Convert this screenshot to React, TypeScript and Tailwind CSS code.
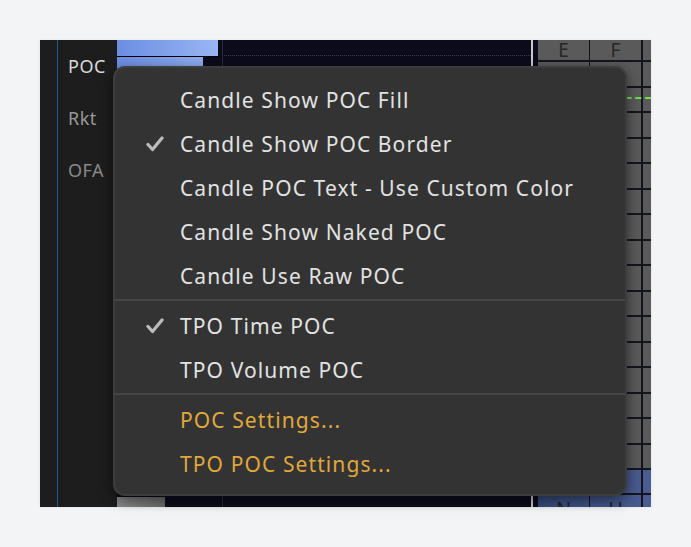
import React from "react";

interface MenuItem {
  label: string;
  checked?: boolean;
  accent?: boolean;
}

const groups: MenuItem[][] = [
  [
    { label: "Candle Show POC Fill" },
    { label: "Candle Show POC Border", checked: true },
    { label: "Candle POC Text - Use Custom Color" },
    { label: "Candle Show Naked POC" },
    { label: "Candle Use Raw POC" },
  ],
  [{ label: "TPO Time POC", checked: true }, { label: "TPO Volume POC" }],
  [
    { label: "POC Settings...", accent: true },
    { label: "TPO POC Settings...", accent: true },
  ],
];

function Check() {
  return (
    <svg width="18" height="18" viewBox="0 0 18 18" className="absolute left-[31px] top-[13px]">
      <path
        d="M2 9.5 L6.5 14.5 L16 3"
        fill="none"
        stroke="#bbbbbb"
        strokeWidth="3.3"
        strokeLinecap="round"
        strokeLinejoin="round"
      />
    </svg>
  );
}

function PocMenu() {
  return (
    <div className="absolute left-[73px] top-[26px] w-[514px] h-[430px] rounded-[12px] bg-[#333333] border-2 border-[#3d3d3d] shadow-[0_4px_14px_rgba(0,0,0,0.5)] pt-[10px] pb-[8px]">
      {groups.map((group, gi) => (
        <div key={gi}>
          {gi > 0 && <div className="mt-[1px] mb-[3px] h-[2px] bg-[#454545]" />}
          {group.map((item) => (
            <div key={item.label} className="relative h-[44px] flex items-center pl-[65px]">
              {item.checked && <Check />}
              <span
                className={`text-[21px] leading-none tracking-[1.1px] ${
                  item.accent ? "text-[#e0a83c]" : "text-[#e2e2e2]"
                }`}
              >
                {item.label}
              </span>
            </div>
          ))}
        </div>
      ))}
    </div>
  );
}

function ChartPane() {
  return (
    <div className="relative flex-1 bg-[#0c0b1b] flex flex-col overflow-hidden">
      <div className="flex h-[16px]">
        <div className="w-[101px] bg-gradient-to-r from-[#6b8ee2] to-[#9ab5f4]" />
        <div className="flex-1 border-b border-dotted border-[#3a3a4a] ml-[4px]" />
      </div>
      <div className="h-[1px] w-[101px] bg-black" />
      <div className="flex-1 flex">
        <div className="w-[86px] bg-gradient-to-r from-[#6b8ee2] to-[#8fadf0] h-[12px]" />
      </div>
      <div className="h-[10px] w-[48px] bg-gradient-to-r from-[#8a8a8a] to-[#6a6a6a]" />
      <div className="absolute left-[105px] top-0 bottom-0 w-[1px] bg-[#2a2a3a]" />
      <div className="absolute right-0 top-0 bottom-0 w-[2px] bg-[#c9c9c9]" />
    </div>
  );
}

function GridPane() {
  const rows = Array.from({ length: 16 });
  return (
    <div className="w-[118px] flex">
      <div className="w-[5px] bg-[#0c0b1b]" />
      <div className="flex-1 flex flex-col bg-[#5a5a5a]">
        <div className="h-[22px] shrink-0 flex border-b-2 border-[#15151f]">
          <div className="w-[52px] border-r border-[#15151f] flex items-center justify-center text-[19px] leading-[20px] text-[#262626]">
            E
          </div>
          <div className="w-[53px] border-r-2 border-[#15151f] flex items-center justify-center text-[19px] leading-[20px] text-[#262626]">
            F
          </div>
          <div className="flex-1" />
        </div>
        {rows.map((_, i) => (
          <div key={i} className="relative h-[25.5px] shrink-0 flex border-b-2 border-[#15151f]">
            <div className="w-[52px] border-r border-[#15151f]" />
            <div className="w-[53px] border-r-2 border-[#15151f]" />
            <div className="flex-1" />
            {i === 1 && (
              <div className="absolute left-0 right-0 top-[9px] border-t-2 border-dashed border-[#6fe04a]" />
            )}
          </div>
        ))}
        <div className="flex-1 min-h-0 flex flex-col bg-gradient-to-r from-[#36497a] to-[#4a5e92] overflow-hidden">
          <div className="h-[25px] shrink-0 flex border-b-2 border-[#15151f]">
            <div className="w-[52px] border-r border-[#15151f]" />
            <div className="w-[53px] border-r-2 border-[#15151f]" />
          </div>
          <div className="flex-1 flex">
            <div className="w-[52px] border-r border-[#15151f] flex justify-center pt-[4px] text-[20px] leading-none text-[#1c2236]">
              N
            </div>
            <div className="w-[53px] border-r-2 border-[#15151f] flex justify-center pt-[4px] text-[20px] leading-none text-[#1c2236]">
              U
            </div>
          </div>
        </div>
      </div>
    </div>
  );
}

export default function App() {
  return (
    <div
      className="w-[691px] h-[547px] bg-[#f3f4f6] pt-[40px] pl-[40px]"
      style={{ fontFamily: '"Noto Sans", "Open Sans", sans-serif' }}
    >
      <div className="relative w-[611px] h-[467px] flex shadow-[0_0_3px_rgba(0,0,0,0.08)]">
        <div className="w-[77px] bg-[#1d1d1d] flex">
          <div className="w-[17px]" />
          <div className="w-[1px] bg-[#1f5a9a]" />
          <div className="flex-1 flex flex-col pl-[10px] pt-[15px] gap-[30px] text-[18px] leading-[22px] tracking-[0.5px]">
            <span className="text-[#dadada]">POC</span>
            <span className="text-[#9a9a9a]">Rkt</span>
            <span className="text-[#8a8a8a]">OFA</span>
          </div>
        </div>
        <ChartPane />
        <GridPane />
        <PocMenu />
      </div>
    </div>
  );
}
